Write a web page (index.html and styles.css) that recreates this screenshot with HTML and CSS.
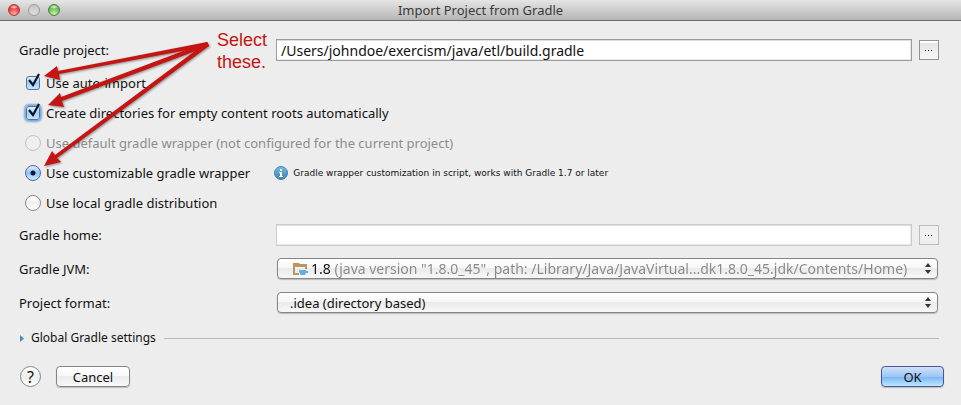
FILE: index.html
```html
<!DOCTYPE html>
<html lang="en">
<head>
<meta charset="utf-8">
<title>Import Project from Gradle</title>
<link rel="stylesheet" href="styles.css">
</head>
<body>
<header class="titlebar">
  <div class="lights">
    <button class="light red" type="button" aria-label="Close"></button>
    <button class="light gray" type="button" aria-label="Minimize"></button>
    <button class="light green" type="button" aria-label="Zoom"></button>
  </div>
  <h1>Import Project from Gradle</h1>
</header>
<form class="dialog">
  <div class="row">
    <label for="project">Gradle project:</label>
    <div class="field">
      <input class="text" id="project" type="text" value="/Users/johndoe/exercism/java/etl/build.gradle">
      <button class="browse" type="button" aria-label="Browse for project"><svg width="8" height="2" viewBox="0 0 8 2"><path d="M0 1h1v1H0zM3 1h1v1H3zM6 1h1v1H6z"/></svg></button>
    </div>
  </div>
  <div class="options">
    <div class="option"><input id="auto" class="check" type="checkbox" checked><svg class="tick" viewBox="0 0 16 16"><path d="M4 7l4 5 6-11"/></svg><label for="auto">Use auto-import</label></div>
    <div class="option"><input id="dirs" class="check focused" type="checkbox" checked><svg class="tick" viewBox="0 0 16 16"><path d="M4 7l4 5 6-11"/></svg><label for="dirs">Create directories for empty content roots automatically</label></div>
    <div class="option disabled"><input id="default" class="radio" type="radio" name="wrapper" disabled><label for="default">Use default gradle wrapper (not configured for the current project)</label></div>
    <div class="option"><input id="custom" class="radio" type="radio" name="wrapper" checked><label for="custom">Use customizable gradle wrapper</label>
      <p class="hint"><svg width="14" height="14" viewBox="0 0 14 14"><defs><linearGradient id="blue" x2="0" y2="1"><stop stop-color="#7dbbdc"/><stop offset="1" stop-color="#3783ad"/></linearGradient></defs><circle cx="7" cy="7" r="6.5" fill="url(#blue)" stroke="#4389b0"/><path d="M6 3h2v2H6zM5 6h3v4h1v1H5v-1h1V7H5z" fill="#fff"/></svg>Gradle wrapper customization in script, works with Gradle 1.7 or later</p></div>
    <div class="option"><input id="local" class="radio" type="radio" name="wrapper"><label for="local">Use local gradle distribution</label></div>
  </div>
  <div class="row home">
    <label for="home">Gradle home:</label>
    <div class="field muted">
      <input class="text" id="home" type="text">
      <button class="browse" type="button" aria-label="Browse for Gradle home"><svg width="8" height="2" viewBox="0 0 8 2"><path d="M0 1h1v1H0zM3 1h1v1H3zM6 1h1v1H6z"/></svg></button>
    </div>
  </div>
  <div class="row">
    <label for="jvm">Gradle JVM:</label>
    <div class="popup">
      <svg class="folder" width="16" height="14" viewBox="0 0 16 14"><path d="M1 1h6l1 1h7v5h-2V5H3v6h4v2H1z" fill="#bd965f"/><path d="M7 8h7v1h2v2h-2l-1 2H9c-1-1-2-2-2-5z" fill="#62b2dd"/></svg>
      <select id="jvm" class="two-tone"><option>1.8 (java version "1.8.0_45", path: /Library/Java/JavaVirtual...dk1.8.0_45.jdk/Contents/Home)</option></select>
      <svg class="arrows" width="6" height="12" viewBox="0 0 6 12"><path d="M3 0l3 4H0zM0 7h6l-3 4z"/></svg>
    </div>
  </div>
  <div class="row">
    <label for="format">Project format:</label>
    <div class="popup">
      <select id="format"><option>.idea (directory based)</option></select>
      <svg class="arrows" width="6" height="12" viewBox="0 0 6 12"><path d="M3 0l3 4H0zM0 7h6l-3 4z"/></svg>
    </div>
  </div>
  <div class="section">
    <button class="disclosure" type="button" aria-expanded="false"><svg width="4" height="7" viewBox="0 0 4 7"><path d="M0 0l4 3.5L0 7z" fill="#3f8fbf"/></svg>Global Gradle settings</button>
    <hr>
  </div>
  <footer class="actions">
    <button class="help" type="button" aria-label="Help">?</button>
    <button class="push" type="button">Cancel</button>
    <button class="push primary" type="submit">OK</button>
  </footer>
</form>
<svg class="pointers" width="220" height="180" viewBox="0 0 220 180" aria-hidden="true">
  <path d="M207 42L58 71 57 66 44 76 60 80 59 74 209 46z"/>
  <path d="M207 42L61 97 60 93 48 105 64 107 62 101 209 46z"/>
  <path d="M207 42L55 155 52 151 44 166 61 162 57 158 209 46z"/>
</svg>
<p class="note">Select<br>these.</p>
</body>
</html>
```
FILE: styles.css
```css
* { box-sizing: border-box; }
body {
  position: relative;
  margin: 0;
  min-height: 100vh;
  background: #ededed;
  color: #111;
  font: 13px/18px "Noto Sans", "Open Sans", sans-serif;
}
button, input, select { font: inherit; color: inherit; margin: 0; }
p, h1 { margin: 0; }

.titlebar {
  display: grid;
  grid-template-columns: 1fr auto 1fr;
  align-items: center;
  height: 21px;
  padding: 0 8px;
  background: linear-gradient(#e5e5e5, #b5b5b5);
  border-bottom: 1px solid #6a6a6a;
}
.titlebar h1 { font-size: 13px; line-height: 18px; font-weight: 400; color: #3a3a3a; }
.lights { display: flex; gap: 8px; }
.light {
  width: 12px;
  height: 12px;
  padding: 0;
  border: 1px solid #888;
  border-radius: 50%;
}
.red { background: radial-gradient(ellipse 4px 2px at 50% 20%, #ffe2e0, transparent), radial-gradient(circle at 50% 90%, #ffb0a8, #e8403e 60%); border-color: #a03c3c; }
.gray { background: linear-gradient(#c4c4c4, #dedede); border-color: #999; }
.green { background: radial-gradient(ellipse 4px 2px at 50% 20%, #eefae8, transparent), radial-gradient(circle at 50% 90%, #c9f8ad, #6aba58 60%); border-color: #4d7d43; }

.dialog { padding: 18px 22px 0 19px; }
.row {
  display: grid;
  grid-template-columns: 257px 1fr;
  align-items: center;
  margin-bottom: 13px;
}
.row:first-child { margin-bottom: 7px; }
.field { display: flex; align-items: center; gap: 7px; }
.text {
  flex: 1;
  min-width: 0;
  height: 22px;
  padding: 0 4px;
  border: 1px solid #9c9c9c;
  background: #fff;
  box-shadow: inset 0 1px #ddd, inset -1px -1px #e9e9e9;
  outline: 0;
  font-size: 14px;
}
.browse {
  display: grid;
  place-items: center;
  width: 20px;
  height: 20px;
  padding: 0;
  border: 1px solid #929292;
  background: linear-gradient(#fff 2px, #e4e4e4 2px, #f8f8f8);
}
.muted .text { border-color: #ccc; }
.muted .browse { border-color: #bcbcbc; background: #f0f0f0; }

.option { position: relative; display: flex; align-items: center; height: 30px; padding-left: 6px; }
.option label { margin-left: 5px; }
.check, .radio { appearance: none; width: 16px; height: 16px; flex: none; }
.check {
  width: 14px;
  height: 14px;
  margin: 0 1px;
  border: 1px solid #5c6f9c;
  border-radius: 3px;
  background: linear-gradient(#e4f1fd, #a2cdf6 50%, #c6e8ff);
}
.focused { box-shadow: 0 0 2px 2px #76a9dc; }
.tick {
  position: absolute;
  left: 6px;
  top: 5px;
  width: 16px;
  height: 16px;
  fill: none;
  stroke: #081626;
  stroke-width: 2.2;
  pointer-events: none;
}
.radio {
  border: 1px solid #888;
  border-radius: 50%;
  background: linear-gradient(#fff, #f0f0f0 50%, #fff);
}
.radio:checked {
  border-color: #5864a0;
  background: radial-gradient(circle, #071b33 2px, transparent 3px), linear-gradient(#e4f0fc, #8ec3f3 50%, #cceeff);
}
.disabled { color: #8c8c8c; }
.disabled .radio { border-color: #c2c2c2; background: #efefef; }
.hint {
  display: flex;
  align-items: center;
  gap: 5px;
  margin-left: 24px;
  font-family: "DejaVu Sans", sans-serif;
  font-size: 9px;
}

.home { margin-top: 6px; margin-bottom: 12px; }
.popup {
  position: relative;
  display: flex;
  height: 21px;
  margin: 0 1px;
  border: 1px solid #858585;
  border-radius: 4px;
  background: linear-gradient(#fff, #f7f7f7 45%, #eaeaea 50%, #f8f8f8);
  box-shadow: 0 1px 1px #bbb;
}
.popup select {
  appearance: none;
  flex: 1;
  min-width: 0;
  height: 19px;
  padding: 0 20px 0 12px;
  border: 0;
  background: none;
  outline: 0;
}
.popup .two-tone {
  padding-left: 33px;
  font-size: 14px;
  color: transparent;
  background: linear-gradient(90deg, #111 56px, #888 56px);
  background-clip: text;
  -webkit-background-clip: text;
}
.two-tone option { color: #111; }
.folder { position: absolute; left: 14px; top: 3px; }
.arrows { position: absolute; right: 6px; top: 4px; fill: #333; pointer-events: none; }

.section { display: flex; align-items: center; gap: 8px; margin-top: 16px; }
.disclosure {
  display: flex;
  align-items: center;
  gap: 7px;
  padding: 0 0 0 1px;
  border: 0;
  background: none;
  font-size: 12px;
}
.section hr { flex: 1; height: 1px; margin: 0; border: 0; background: #b8b8b8; }

.actions { display: flex; align-items: center; margin: 19px -5px 0 1px; }
.help {
  width: 21px;
  height: 21px;
  padding: 0;
  border: 1px solid #858585;
  border-radius: 50%;
  background: linear-gradient(#fff, #eee 50%, #fff);
  font-size: 16px;
  line-height: 18px;
}
.push {
  width: 74px;
  height: 21px;
  margin-left: 15px;
  padding: 0;
  border: 1px solid #858585;
  border-radius: 4px;
  background: linear-gradient(#fff, #f8f8f8 45%, #ebebeb 50%, #f8f8f8);
  box-shadow: 0 1px 1px #bbb;
}
.primary {
  width: 63px;
  margin-left: auto;
  border-color: #4a569c;
  background: linear-gradient(#cfe0f8, #9dc6f4 50%, #78b5f2 52%, #bde9ff);
}

.pointers {
  position: absolute;
  left: 0;
  top: 0;
  fill: #c41512;
  filter: drop-shadow(1px 1px 1px #0006);
  pointer-events: none;
}
.note {
  position: absolute;
  left: 217px;
  top: 29px;
  color: #c41512;
  font: 18px/22px "Liberation Sans", Arial, sans-serif;
}
```
